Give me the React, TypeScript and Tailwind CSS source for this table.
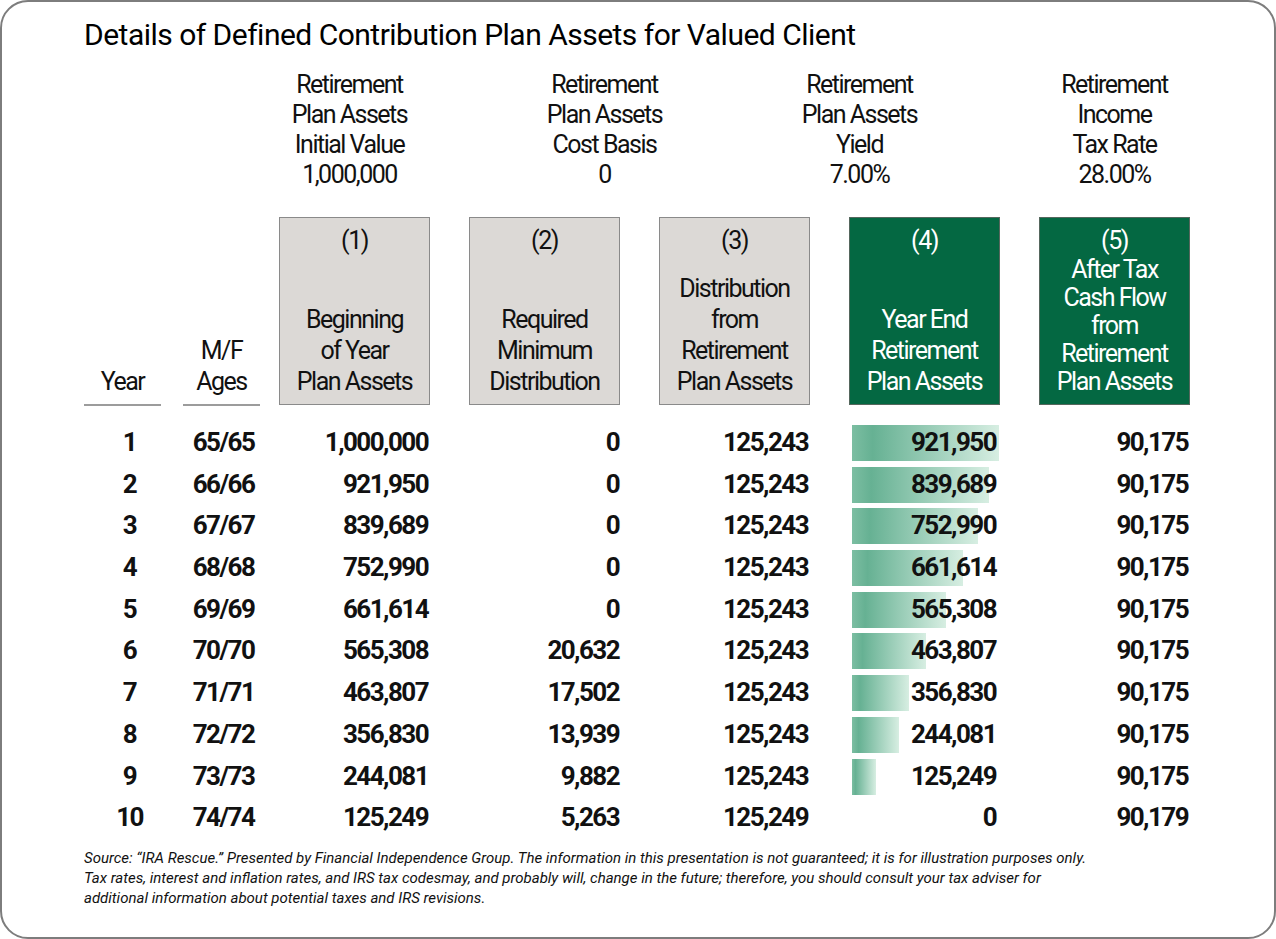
import React from "react";

type Row = [string, string, string, string, string, string, string, number];

const rows: Row[] = [
  ["1", "65/65", "1,000,000", "0", "125,243", "921,950", "90,175", 147],
  ["2", "66/66", "921,950", "0", "125,243", "839,689", "90,175", 137],
  ["3", "67/67", "839,689", "0", "125,243", "752,990", "90,175", 126],
  ["4", "68/68", "752,990", "0", "125,243", "661,614", "90,175", 111],
  ["5", "69/69", "661,614", "0", "125,243", "565,308", "90,175", 94],
  ["6", "70/70", "565,308", "20,632", "125,243", "463,807", "90,175", 74],
  ["7", "71/71", "463,807", "17,502", "125,243", "356,830", "90,175", 57],
  ["8", "72/72", "356,830", "13,939", "125,243", "244,081", "90,175", 47],
  ["9", "73/73", "244,081", "9,882", "125,243", "125,249", "90,175", 24],
  ["10", "74/74", "125,249", "5,263", "125,249", "0", "90,179", 0],
];

const topHeads = [
  ["Retirement", "Plan Assets", "Initial Value", "1,000,000"],
  ["Retirement", "Plan Assets", "Cost Basis", "0"],
  ["Retirement", "Plan Assets", "Yield", "7.00%"],
  ["Retirement", "Income", "Tax Rate", "28.00%"],
];

function Box({
  n,
  lines,
  green,
  tight,
}: {
  n: string;
  lines: string[];
  green?: boolean;
  tight?: boolean;
}) {
  return (
    <div
      className={
        "flex h-[188px] w-[151px] flex-col justify-between border text-center " +
        (green
          ? "border-[#55675d] bg-[#046842] text-white"
          : "border-[#8a8a8a] bg-[#dcd9d6] text-[#111]")
      }
    >
      <div className="pt-[7px] leading-[31px]">{n}</div>
      <div className={tight ? "pb-[9px] leading-[28px]" : "pb-[7px] leading-[31px]"}>
        {lines.map((l, i) => (
          <div key={i}>{l}</div>
        ))}
      </div>
    </div>
  );
}

export default function App() {
  return (
    <div className="h-[939px] w-[1276px] bg-white font-['Roboto',sans-serif] text-[#111]">
      <div className="h-[939px] w-[1276px] rounded-[28px] border-2 border-[#7d7d7d]">
        {/* Title */}
        <div className="pl-[82px] pt-[15px] text-[30px] leading-[36px] tracking-[-0.017em] text-black">
          Details of Defined Contribution Plan Assets for Valued Client
        </div>

        {/* Top assumptions */}
        <div className="mt-[17px] flex pl-[220px] text-[25px] leading-[30px] tracking-[-0.06em]">
          {topHeads.map((h, i) => (
            <div key={i} className="w-[255px] text-center">
              {h.map((l, j) => (
                <div key={j}>{l}</div>
              ))}
            </div>
          ))}
        </div>

        {/* Column headers */}
        <div className="mt-[27px] flex items-start text-[25px] tracking-[-0.06em]">
          <div className="ml-[82px] flex h-[189px] w-[77px] items-end justify-center border-b-2 border-[#9c9c9c] pb-[7px] leading-[31px]">
            Year
          </div>
          <div className="ml-[22px] flex h-[189px] w-[77px] flex-col items-center justify-end border-b-2 border-[#9c9c9c] pb-[7px] leading-[31px]">
            <div>M/F</div>
            <div>Ages</div>
          </div>
          <div className="ml-[19px]">
            <Box n="(1)" lines={["Beginning", "of Year", "Plan Assets"]} />
          </div>
          <div className="ml-[39px]">
            <Box n="(2)" lines={["Required", "Minimum", "Distribution"]} />
          </div>
          <div className="ml-[39px]">
            <Box n="(3)" lines={["Distribution", "from", "Retirement", "Plan Assets"]} />
          </div>
          <div className="ml-[39px]">
            <Box green n="(4)" lines={["Year End", "Retirement", "Plan Assets"]} />
          </div>
          <div className="ml-[39px]">
            <Box
              green
              tight
              n="(5)"
              lines={["After Tax", "Cash Flow", "from", "Retirement", "Plan Assets"]}
            />
          </div>
        </div>

        {/* Data rows */}
        <div className="mt-[16px] text-[26px] font-bold tracking-[-0.06em]">
          {rows.map((r, i) => (
            <div key={i} className="flex h-[41.7px] items-center leading-[41.7px]">
              <div className="ml-[82px] w-[77px] pl-[14px] text-center">{r[0]}</div>
              <div className="ml-[22px] w-[77px] pl-[4px] text-center">{r[1]}</div>
              <div className="ml-[19px] w-[151px] pr-[2px] text-right">{r[2]}</div>
              <div className="ml-[39px] w-[151px] pr-[1px] text-right">{r[3]}</div>
              <div className="ml-[39px] w-[151px] pr-[2px] text-right">{r[4]}</div>
              <div className="relative ml-[39px] h-[41.7px] w-[151px] pr-[4px] text-right">
                {r[7] > 0 && (
                  <div
                    className="absolute left-[3px] top-[3px] h-[36px] bg-[linear-gradient(to_right,#7cbea2,#66b193_14%,#d7eee2)]"
                    style={{ width: r[7] }}
                  />
                )}
                <span className="relative">{r[5]}</span>
              </div>
              <div className="ml-[39px] w-[151px] pr-[2px] text-right">{r[6]}</div>
            </div>
          ))}
        </div>

        {/* Footer */}
        <div className="mt-[9px] pl-[82px] text-[15px] italic leading-[20px] tracking-[0em] text-[#111]">
          <div>
            Source: “IRA Rescue.” Presented by Financial Independence Group. The information in this
            presentation is not guaranteed; it is for illustration purposes only.
          </div>
          <div>
            Tax rates, interest and inflation rates, and IRS tax codesmay, and probably will, change in
            the future; therefore, you should consult your tax adviser for
          </div>
          <div>additional information about potential taxes and IRS revisions.</div>
        </div>
      </div>
    </div>
  );
}
